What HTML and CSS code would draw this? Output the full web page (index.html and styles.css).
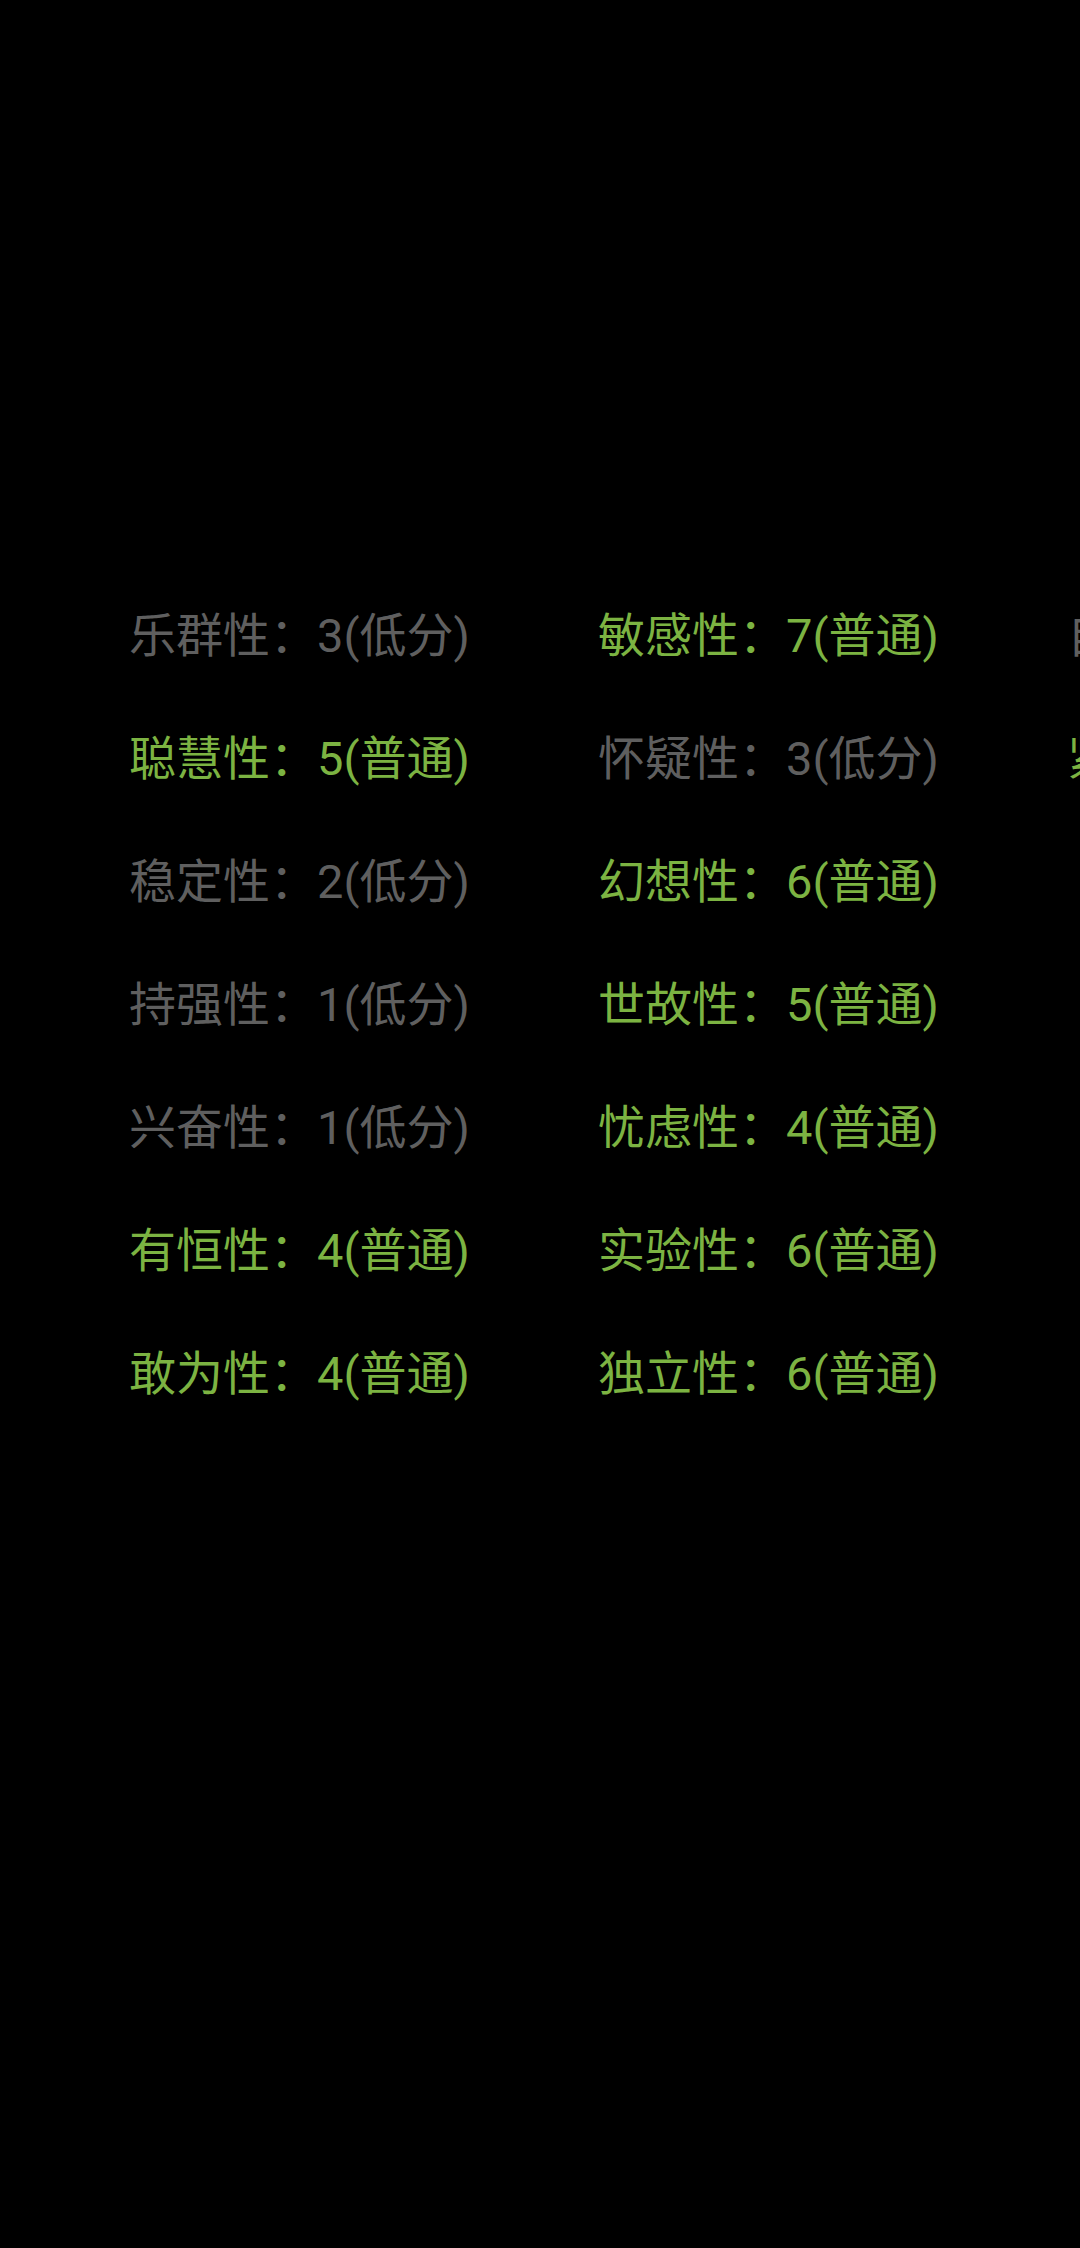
FILE: index.html
```html
<!DOCTYPE html>
<html lang="zh-CN">
<head>
<meta charset="utf-8">
<title>16PF</title>
<link rel="stylesheet" href="styles.css">
</head>
<body>
<main class="screen">
  <div class="traits">
    <div class="trait low">乐群性：3(低分)</div>
    <div class="trait normal">聪慧性：5(普通)</div>
    <div class="trait low">稳定性：2(低分)</div>
    <div class="trait low">持强性：1(低分)</div>
    <div class="trait low">兴奋性：1(低分)</div>
    <div class="trait normal">有恒性：4(普通)</div>
    <div class="trait normal">敢为性：4(普通)</div>
    <div class="trait normal">敏感性：7(普通)</div>
    <div class="trait low">怀疑性：3(低分)</div>
    <div class="trait normal">幻想性：6(普通)</div>
    <div class="trait normal">世故性：5(普通)</div>
    <div class="trait normal">忧虑性：4(普通)</div>
    <div class="trait normal">实验性：6(普通)</div>
    <div class="trait normal">独立性：6(普通)</div>
    <div class="trait low">自律性：3(低分)</div>
    <div class="trait normal">紧张性：5(普通)</div>
  </div>
</main>
</body>
</html>
```

FILE: styles.css
```css
html, body {
  margin: 0;
  padding: 0;
  background: #000;
}
.screen {
  width: 1080px;
  height: 2248px;
  overflow: hidden;
  background: #000;
  padding-top: 574px;
  padding-left: 129px;
  box-sizing: border-box;
}
.traits {
  display: grid;
  grid-template-rows: repeat(7, 123px);
  grid-auto-flow: column;
  grid-auto-columns: 469px;
}
.trait {
  font-family: Roboto, "Noto Sans CJK SC", sans-serif;
  font-size: 47px;
  line-height: 123px;
  white-space: nowrap;
}
.low {
  color: #5f5f5f;
}
.normal {
  color: #7cb342;
}
```
